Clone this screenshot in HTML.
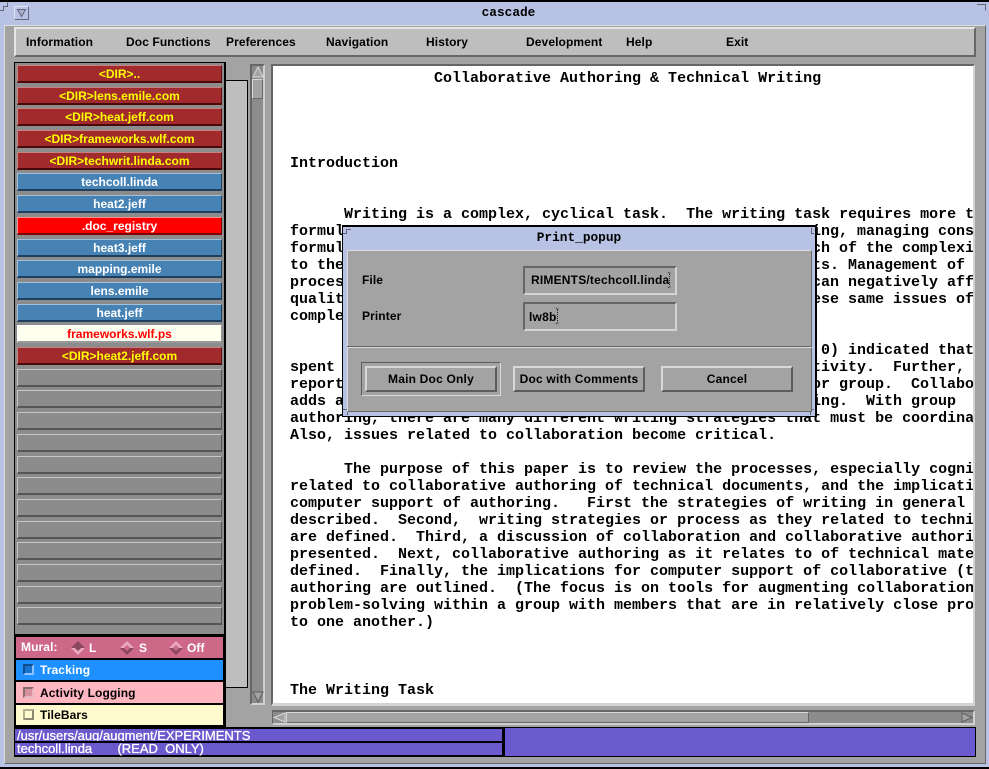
<!DOCTYPE html>
<html><head><meta charset="utf-8"><title>cascade</title>
<style>
html,body{margin:0;padding:0;background:#000;}
#r{position:relative;width:989px;height:769px;overflow:hidden;background:#a3a3a3;font-family:"Liberation Sans",sans-serif;}
#r div,#r pre,#r svg{position:absolute;box-sizing:border-box;margin:0;}
.m{font-weight:bold;font-size:12px;letter-spacing:.1px;color:#000;top:35px;line-height:14px;white-space:pre;}
.b{left:17px;width:205px;height:18px;border:1px solid;font-weight:bold;font-size:12px;line-height:17px;text-align:center;white-space:pre;overflow:hidden;}
.d{background:#a02a2c;color:#ff0;border-color:#c88080 #5a1010 #4a0808 #c88080;border-bottom-width:2px;}
.s{background:#4682b4;color:#fff;border-color:#a0c0dc #1f3f5f #1f3f5f #a0c0dc;border-bottom-width:2px;}
.e{background:#8c8c8c;border-color:#c6c6c6 #555 #555 #c6c6c6;border-bottom-width:2px;}
.t{font-family:"Liberation Mono",monospace;font-weight:bold;font-size:15px;line-height:17px;color:#000;white-space:pre;}
.o{font-weight:bold;font-size:12px;line-height:14px;white-space:pre;letter-spacing:.1px;}
.st{font-weight:normal;font-size:13px;line-height:14px;white-space:pre;color:#fff;-webkit-text-stroke:.3px #fff;}
.pb{top:366px;width:132px;height:26px;background:#a3a3a3;border:2px solid;border-color:#d8d8d8 #5c5c5c #5c5c5c #d8d8d8;font-weight:bold;font-size:12px;letter-spacing:.2px;line-height:22px;text-align:center;white-space:pre;color:#000;}
.f{left:523px;width:154px;border:2px solid;border-color:#666 #d4d4d4 #d4d4d4 #666;background:#a3a3a3;font-weight:bold;font-size:12px;letter-spacing:.2px;white-space:pre;overflow:hidden;color:#000;}
</style></head><body>
<div id="r">
<div style="left:0;top:0;width:989px;height:2px;background:#000"></div>
<div style="left:0;top:2px;width:989px;height:24px;background:#b7c2e4"></div>
<div style="left:0;top:2px;width:5px;height:765px;background:#b7c2e4"></div>
<div style="left:985px;top:2px;width:4px;height:765px;background:#b7c2e4"></div>
<div style="left:0;top:763px;width:989px;height:4px;background:#b7c2e4"></div>
<div style="left:0;top:767px;width:989px;height:2px;background:#000"></div>
<div style="left:4px;top:25px;width:982px;height:739px;border:1px solid;border-color:#dcdcdc #666 #666 #dcdcdc;background:#a3a3a3"></div>
<svg style="left:0;top:2px" width="12" height="10"><path d="M0 8.5H3.5V4.5H7.5V.5" stroke="#667" fill="none"/></svg>
<svg style="left:977px;top:2px" width="12" height="10"><path d="M0 2.5H8.5V8.5" stroke="#667" fill="none"/></svg>

<div style="left:14px;top:6px;width:15px;height:14px;border:1px solid;border-color:#dfe5f5 #667 #667 #dfe5f5;background:#b7c2e4"></div>
<svg style="left:16px;top:8px" width="11" height="10"><path d="M1.5 1.5H9.5L5.5 8.5Z" fill="#a7b0cc" stroke="#667"/></svg>
<div style="left:0;top:5px;width:1017px;text-align:center;font-family:'Liberation Mono',monospace;font-weight:bold;font-size:12.8px;line-height:16px;color:#000">cascade</div>

<div style="left:14px;top:27px;width:962px;height:30px;background:#bebebe;border:2px solid;border-color:#e6e6e6 #666 #666 #e6e6e6"></div>
<div class="m" style="left:26px">Information</div>
<div class="m" style="left:126px">Doc Functions</div>
<div class="m" style="left:226px">Preferences</div>
<div class="m" style="left:326px">Navigation</div>
<div class="m" style="left:426px">History</div>
<div class="m" style="left:526px">Development</div>
<div class="m" style="left:626px">Help</div>
<div class="m" style="left:726px">Exit</div>

<div style="left:225px;top:80px;width:23px;height:608px;background:#bebebe;border:1px solid #000;border-left:0"></div>
<div style="left:14px;top:62px;width:212px;height:665px;background:#8c8c8c;border:1px solid #000;border-right-width:2px"></div>
<div class="b d" style="top:65px">&lt;DIR&gt;..</div>
<div class="b d" style="top:87px">&lt;DIR&gt;lens.emile.com</div>
<div class="b d" style="top:108px">&lt;DIR&gt;heat.jeff.com</div>
<div class="b d" style="top:130px">&lt;DIR&gt;frameworks.wlf.com</div>
<div class="b d" style="top:152px">&lt;DIR&gt;techwrit.linda.com</div>
<div class="b s" style="top:173px">techcoll.linda</div>
<div class="b s" style="top:195px">heat2.jeff</div>
<div class="b" style="top:217px;background:#f00;color:#fff;border-color:#ff9090 #800000 #800000 #ff9090;border-bottom-width:2px">.doc_registry</div>
<div class="b s" style="top:239px">heat3.jeff</div>
<div class="b s" style="top:260px">mapping.emile</div>
<div class="b s" style="top:282px">lens.emile</div>
<div class="b s" style="top:304px">heat.jeff</div>
<div class="b" style="top:325px;background:#fffff0;color:#f00;border-color:#fff #999 #999 #fff;border-bottom-width:2px">frameworks.wlf.ps</div>
<div class="b d" style="top:347px">&lt;DIR&gt;heat2.jeff.com</div>
<div class="b e" style="top:369px"></div>
<div class="b e" style="top:390px"></div>
<div class="b e" style="top:412px"></div>
<div class="b e" style="top:434px"></div>
<div class="b e" style="top:456px"></div>
<div class="b e" style="top:477px"></div>
<div class="b e" style="top:499px"></div>
<div class="b e" style="top:521px"></div>
<div class="b e" style="top:542px"></div>
<div class="b e" style="top:564px"></div>
<div class="b e" style="top:586px"></div>
<div class="b e" style="top:607px"></div>

<div style="left:15px;top:634px;width:210px;height:93px;background:#000"></div>
<div style="left:16px;top:637px;width:207px;height:21px;background:#cd6889"></div>
<div style="left:16px;top:660px;width:207px;height:20px;background:#1e90ff"></div>
<div style="left:16px;top:682px;width:207px;height:21px;background:#ffb6c1"></div>
<div style="left:16px;top:705px;width:207px;height:20px;background:#fffacd"></div>
<div class="o" style="left:21px;top:640px;color:#fff">Mural:</div>
<svg style="left:71px;top:641px" width="14" height="14"><path d="M7 0L14 7H10L7 4L4 7H0Z" fill="#8b4660"/><path d="M7 14L14 7H10L7 10L4 7H0Z" fill="#eaa8bf"/><path d="M7 4L10 7L7 10L4 7Z" fill="#8b4660"/></svg>
<div class="o" style="left:89px;top:641px;color:#fff">L</div>
<svg style="left:120px;top:641px" width="14" height="14"><path d="M7 0L14 7H10L7 4L4 7H0Z" fill="#eaa8bf"/><path d="M7 14L14 7H10L7 10L4 7H0Z" fill="#8b4660"/><path d="M7 4L10 7L7 10L4 7Z" fill="#cd6889"/></svg>
<div class="o" style="left:139px;top:641px;color:#fff">S</div>
<svg style="left:169px;top:641px" width="14" height="14"><path d="M7 0L14 7H10L7 4L4 7H0Z" fill="#eaa8bf"/><path d="M7 14L14 7H10L7 10L4 7H0Z" fill="#8b4660"/><path d="M7 4L10 7L7 10L4 7Z" fill="#cd6889"/></svg>
<div class="o" style="left:187px;top:641px;color:#fff">Off</div>

<div style="left:23px;top:664px;width:11px;height:11px;background:#1874cd;border:2px solid;border-color:#104e8b #8cc4ff #8cc4ff #104e8b"></div>
<div class="o" style="left:40px;top:663px;color:#fff">Tracking</div>
<div style="left:23px;top:687px;width:11px;height:11px;background:#d8919c;border:2px solid;border-color:#8b6a70 #e6b8c0 #e6b8c0 #8b6a70"></div>
<div class="o" style="left:40px;top:686px;color:#000">Activity Logging</div>
<div style="left:23px;top:709px;width:11px;height:11px;background:#fffacd;border:2px solid;border-color:#b5b18f #8b8970 #8b8970 #b5b18f"></div>
<div class="o" style="left:40px;top:708px;color:#000">TileBars</div>

<div style="left:250px;top:64px;width:15px;height:641px;background:#8c8c8c;border:2px solid;border-color:#666 #d0d0d0 #d0d0d0 #666"></div>
<svg style="left:252px;top:66px" width="12" height="12"><path d="M6 1L11 11H1Z" fill="#a3a3a3" stroke="#d8d8d8"/></svg>
<div style="left:252px;top:79px;width:11px;height:20px;background:#a3a3a3;border:1px solid;border-color:#d8d8d8 #666 #666 #d8d8d8"></div>
<svg style="left:252px;top:691px" width="12" height="12"><path d="M1 1H11L6 11Z" fill="#a3a3a3" stroke="#5c5c5c"/></svg>

<div style="left:271px;top:64px;width:704px;height:642px;background:#fff;border:solid;border-width:2px 2px 3px 2px;border-color:#666 #d4d4d4 #d4d4d4 #666"></div>
<div style="left:273px;top:66px;width:700px;height:637px;overflow:hidden">
<pre class="t" style="left:17px;top:4px">                Collaborative Authoring &amp; Technical Writing




Introduction


      Writing is a complex, cyclical task.  The writing task requires more t
formul
formul
to the
proces
qualit
comple


spent
report
adds a
authoring, there are many different writing strategies that must be coordina
Also, issues related to collaboration become critical.

      The purpose of this paper is to review the processes, especially cogni
related to collaborative authoring of technical documents, and the implicati
computer support of authoring.   First the strategies of writing in general
described.  Second,  writing strategies or process as they related to techni
are defined.  Third, a discussion of collaboration and collaborative authori
presented.  Next, collaborative authoring as it relates to of technical mate
defined.  Finally, the implications for computer support of collaborative (t
authoring are outlined.  (The focus is on tools for augmenting collaboration
problem-solving within a group with members that are in relatively close pro
to one another.)



The Writing Task</pre>
<pre class="t" style="left:539px;top:157px">ing, managing cons
ch of the complexi
ts. Management of
can negatively aff
ese same issues of

</pre>
<pre class="t" style="left:548px;top:276px">0) indicated that</pre>
<pre class="t" style="left:539px;top:293px">tivity.  Further,
or group.  Collabo
ing.  With group</pre>
</div>

<div style="left:272px;top:710px;width:703px;height:15px;background:#8c8c8c;border:solid;border-width:2px 2px 2px 1px;border-color:#666 #d0d0d0 #d0d0d0 #666"></div>
<svg style="left:273px;top:712px" width="13" height="11"><path d="M1 5.5L12 1V10Z" fill="#a3a3a3" stroke="#d8d8d8"/></svg>
<div style="left:286px;top:712px;width:523px;height:11px;background:#a3a3a3;border:1px solid;border-color:#d8d8d8 #666 #666 #d8d8d8"></div>
<svg style="left:961px;top:712px" width="12" height="11"><path d="M11 5.5L1 1V10Z" fill="#a3a3a3" stroke="#5c5c5c"/></svg>

<div style="left:14px;top:727px;width:491px;height:30px;background:#000"></div>
<div style="left:15px;top:729px;width:487px;height:12px;background:#6a5acd"></div>
<div style="left:15px;top:743px;width:487px;height:12px;background:#6a5acd"></div>
<div style="left:504px;top:727px;width:472px;height:30px;background:#6a5acd;border:1px solid #000"></div>
<div class="st" style="left:17px;top:729px;height:12px;overflow:hidden">/usr/users/aug/augment/EXPERIMENTS</div>
<div class="st" style="left:17px;top:742px">techcoll.linda       (READ  ONLY)</div>

<!-- dialog -->
<div style="left:342px;top:225px;width:475px;height:192px;background:#000"></div>
<div style="left:343px;top:227px;width:472px;height:189px;background:#b7c2e4"></div>
<svg style="left:343px;top:227px" width="472" height="189"><path d="M0 6.5H3.5V2.5H8M471 6.5H468M468.5 6V1M0 182.5H4M4.5 182V188M471 182.5H467M467.5 182V188" stroke="#667" fill="none"/></svg>
<div style="left:347px;top:250px;width:465px;height:162px;background:#a3a3a3;border-top:1px solid #dcdcdc;border-left:1px solid #dcdcdc;border-right:1px solid #666;border-bottom:1px solid #666"></div>
<div style="left:343px;top:230px;width:472px;text-align:center;font-family:'Liberation Mono',monospace;font-weight:bold;font-size:12.8px;line-height:16px;color:#000">Print_popup</div>
<div class="o" style="left:362px;top:273px;color:#000">File</div>
<div class="o" style="left:362px;top:309px;color:#000">Printer</div>
<div class="f" style="top:266px;height:29px;line-height:25px;padding-left:6px">RIMENTS/techcoll.linda</div>
<div class="f" style="top:302px;height:29px;line-height:26px;padding-left:4px">lw8b</div>
<svg style="left:667px;top:271px" width="5" height="18"><path d="M1 1L2.5 2.5L4 1M2.5 3V15M1 17L2.5 15.5L4 17" stroke="#222" fill="none" stroke-dasharray="1 1"/></svg>
<svg style="left:555px;top:307px" width="5" height="18"><path d="M1 1L2.5 2.5L4 1M2.5 3V15M1 17L2.5 15.5L4 17" stroke="#222" fill="none" stroke-dasharray="1 1"/></svg>
<div style="left:347px;top:346px;width:465px;height:2px;border-top:1px solid #666;border-bottom:1px solid #d8d8d8"></div>
<div style="left:361px;top:362px;width:140px;height:34px;border:1px solid;border-color:#5c5c5c #d8d8d8 #d8d8d8 #5c5c5c"></div>
<div class="pb" style="left:365px">Main Doc Only</div>
<div class="pb" style="left:513px">Doc with Comments</div>
<div class="pb" style="left:661px">Cancel</div>
</div>
</body></html>
